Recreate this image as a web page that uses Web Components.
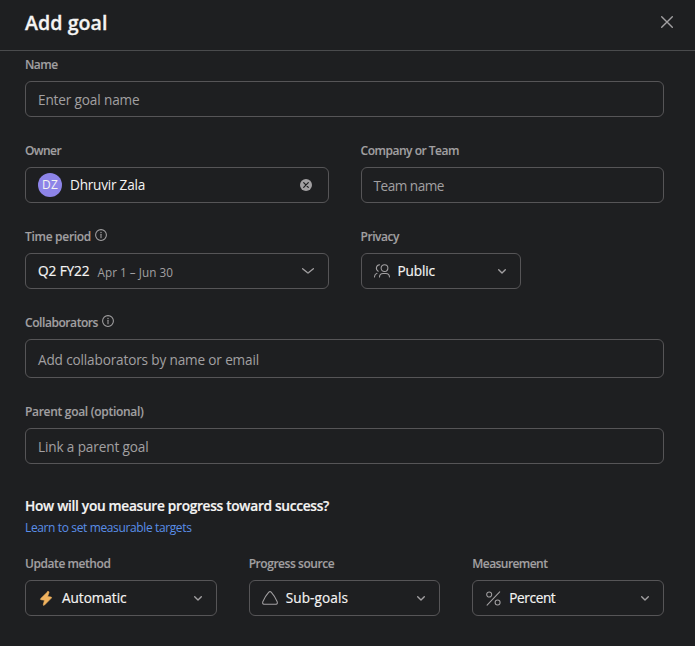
<!DOCTYPE html>
<html lang="en"><head><meta charset="utf-8"><title>Add goal</title>
<style>
html,body{margin:0;height:100%;background:#1e1f21}
body{font-family:"Open Sans","Noto Sans",sans-serif;color:#f5f4f3;overflow:hidden}
</style></head><body>
<goal-dialog></goal-dialog>
<script>
const define = (name, html, setup) => customElements.define(name, class extends HTMLElement {
  connectedCallback() {
    if (this.shadowRoot) return;
    const t = document.createElement('template');
    t.innerHTML = html;
    this.attachShadow({mode: 'open'}).append(t.content.cloneNode(true));
    if (setup) setup(this, this.shadowRoot);
  }
});

// Text run tracked to a given width, in pixels.
define('fit-text', `<style>:host{display:inline-block;white-space:nowrap;flex:none}span{display:inline-block}</style><span><slot></slot></span>`,
  (el, root) => {
    const span = root.querySelector('span'), w = +el.getAttribute('w');
    el.style.width = w + 'px';
    span.style.letterSpacing = ((w - span.getBoundingClientRect().width) / el.textContent.length) + 'px';
  });

const icons = {
  close: [12, 12, '<path d="M.7.7l10.6 10.6M11.3.7L.7 11.3" stroke-width="1.4"/>'],
  clear: [12, 12, '<circle cx="6" cy="6" r="6" fill="currentColor" stroke="none"/><path d="M3.7 3.7l4.6 4.6M8.3 3.7L3.7 8.3" stroke="#1e1f21" stroke-width="1.2"/>'],
  info: [12, 12, '<circle cx="6" cy="6" r="5.4"/><path d="M6 5.3v3.4"/><circle cx="6" cy="3.5" r=".7" fill="currentColor" stroke="none"/>'],
  wide: [12, 6, '<path d="M.6.7L5.3 4.6q.7.5 1.4 0L11.4.7" stroke-width="1.3"/>'],
  small: [8, 5, '<path d="M.7.7L4 3.9 7.3.7" stroke-width="1.4"/>'],
  people: [16, 14, '<circle cx="10.5" cy="4.1" r="3.4"/><path d="M5.6.8A3.4 3.4 0 0 0 4.2 7.2M.5 13v-.4q.2-2.5 2.5-3.3M5.5 13q.1-3.5 3.6-3.5h2.8q3.4 0 3.6 3.5"/>'],
  bolt: [12, 15, '<path d="M7.7 .7L.7 7.6Q0 8.5 1 8.7L4.5 9.2 3.3 13.4Q3.2 15 4.5 14L11.4 7.1Q12 6.2 11 6L7.6 5.5 9 1.5Q9.2-.2 7.7.7z" fill="#f1b35f" stroke="#f1b35f" stroke-width=".6"/>'],
  triangle: [16, 14, '<path d="M6.8 1.1Q8 .1 9.2 1.1 12.4 4.5 15.2 10.8 15.9 12.9 14 13.2H2Q.1 12.9.8 10.8 3.6 4.5 6.8 1.1z"/>'],
  percent: [15, 15, '<circle cx="3.2" cy="3.5" r="2.5"/><circle cx="11.6" cy="11.4" r="2.5"/><path d="M13.7.8L1.1 14.2"/>']
};
define('ui-icon', `<style>:host{display:block;flex:none;color:#a2a0a2}svg{display:block;overflow:visible}</style>`,
  (el, root) => {
    const [w, h, d] = icons[el.getAttribute('name')];
    root.innerHTML += `<svg width="${w}" height="${h}" viewBox="0 0 ${w} ${h}" fill="none" stroke="currentColor" stroke-width="1.05" stroke-linecap="round" stroke-linejoin="round">${d}</svg>`;
  });

define('form-field', `<style>
:host{display:block;min-width:0}
.label{display:flex;align-items:center;gap:4px;height:16px;margin-bottom:8px;font:600 12px/16px "Open Sans","Noto Sans",sans-serif;color:#a2a0a2;-webkit-text-stroke:.1px}
.box{box-sizing:border-box;height:var(--box-height,36px);border:1px solid #565557;border-radius:6px;padding:0 14px 0 12px;display:flex;align-items:center;font-size:13.6px;line-height:20px;color:#a2a0a2}
::slotted(.placeholder){margin-top:2px}
</style><div class="label"><slot name="label"></slot></div><div class="box"><slot></slot></div>`);

define('select-value', `<style>
:host{display:flex;flex:1;align-items:center;color:#f5f4f3;-webkit-text-stroke:.18px}
.icon{width:16px;margin-right:8px;display:flex;justify-content:center}
.text{flex:1}
</style><span class="icon"><slot name="icon"></slot></span><span class="text"><slot></slot></span><ui-icon name="small"></ui-icon>`);

define('user-token', `<style>
:host{display:flex;flex:1;align-items:center;color:#f5f4f3}
.avatar{width:24px;height:24px;border-radius:50%;background:#8d84e8;display:flex;align-items:center;justify-content:center;font-size:12px;margin-right:8px}
.name{flex:1}ui-icon{margin-right:2px}
</style><span class="avatar"><fit-text w="16">DZ</fit-text></span><span class="name"><slot></slot></span><ui-icon name="clear"></ui-icon>`);

define('goal-dialog', `<style>
:host{display:block;height:646px;background:#1e1f21}
header{box-sizing:border-box;height:51px;border-bottom:1px solid #4a4b4d;padding:0 22px 5px 25px;display:flex;align-items:center;justify-content:space-between}
h1{margin:1px 0 0;font-size:19.6px;line-height:28px;font-weight:600;-webkit-text-stroke:.3px}
header ui-icon{margin-bottom:1px}
main{padding:6px 31px 0 25px}
.rows{display:grid;gap:26px}
.two{display:grid;grid-template-columns:1fr 1fr;column-gap:32px}
.three{display:grid;grid-template-columns:1fr 1fr 1fr;column-gap:32px;margin-top:20px}
h2{margin:32px 0 4px;font-size:13.7px;line-height:20px;font-weight:600;-webkit-text-stroke:.2px}
a{display:block;font-size:12px;line-height:16px;color:#5a8ee8}
.tall{--box-height:39px}
.privacy{width:160px}
.quarter{color:#f5f4f3;-webkit-text-stroke:.18px;margin-right:8px}
.dates{font-size:11.7px;flex:1;padding-top:1px}
.lift{margin-bottom:4px}
</style>
<header><h1><fit-text w="82.5">Add goal</fit-text></h1><ui-icon name="close"></ui-icon></header>
<main>
<div class="rows">
<form-field><fit-text slot="label" w="32.5">Name</fit-text><fit-text class="placeholder" w="101.5">Enter goal name</fit-text></form-field>
<div class="two">
<form-field><fit-text slot="label" w="36">Owner</fit-text><user-token><fit-text w="75">Dhruvir Zala</fit-text></user-token></form-field>
<form-field><fit-text slot="label" w="98.5">Company or Team</fit-text><fit-text class="placeholder" w="70.5">Team name</fit-text></form-field>
</div>
<div class="two">
<form-field><fit-text slot="label" w="66">Time period</fit-text><ui-icon class="lift" slot="label" name="info"></ui-icon><fit-text class="quarter" w="51.5">Q2 FY22</fit-text><span class="dates"><fit-text w="75.5">Apr 1 – Jun 30</fit-text></span><ui-icon name="wide"></ui-icon></form-field>
<form-field class="privacy"><fit-text slot="label" w="38.5">Privacy</fit-text><select-value><ui-icon slot="icon" name="people"></ui-icon><fit-text w="37.5">Public</fit-text></select-value></form-field>
</div>
<form-field class="tall"><fit-text slot="label" w="73">Collaborators</fit-text><ui-icon class="lift" slot="label" name="info"></ui-icon><fit-text class="placeholder" w="221">Add collaborators by name or email</fit-text></form-field>
<form-field><fit-text slot="label" w="118.5">Parent goal (optional)</fit-text><fit-text class="placeholder" w="110.5">Link a parent goal</fit-text></form-field>
</div>
<h2><fit-text w="304">How will you measure progress toward success?</fit-text></h2>
<a><fit-text w="166.5">Learn to set measurable targets</fit-text></a>
<div class="three">
<form-field><fit-text slot="label" w="85.5">Update method</fit-text><select-value><ui-icon slot="icon" name="bolt"></ui-icon><fit-text w="64.5">Automatic</fit-text></select-value></form-field>
<form-field><fit-text slot="label" w="85.5">Progress source</fit-text><select-value><ui-icon slot="icon" name="triangle"></ui-icon><fit-text w="62.5">Sub-goals</fit-text></select-value></form-field>
<form-field><fit-text slot="label" w="75">Measurement</fit-text><select-value><ui-icon slot="icon" name="percent"></ui-icon><fit-text w="46">Percent</fit-text></select-value></form-field>
</div>
</main>`);
</script>
</body></html>
